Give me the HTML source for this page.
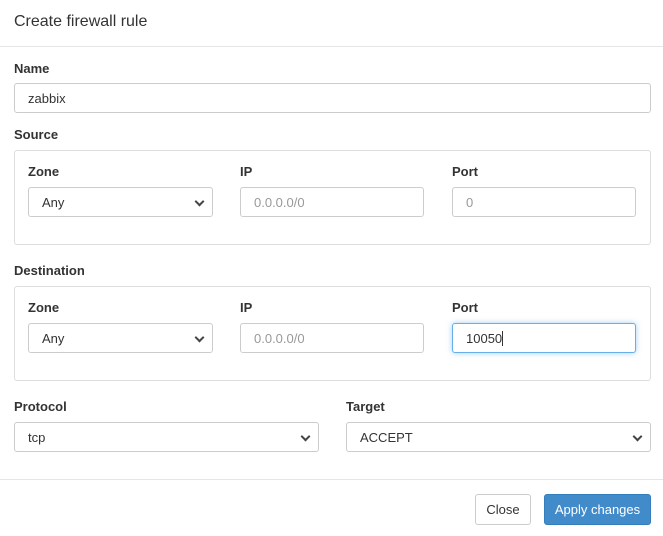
<!DOCTYPE html><html><head><style>
body{margin:0;width:663px;height:536px;background:#fff;font-family:"Liberation Sans",sans-serif;color:#333;position:relative;overflow:hidden}
.a{position:absolute;box-sizing:border-box}
.lbl{font-weight:bold;font-size:13px;line-height:16px}
.in{border:1px solid #ccc;border-radius:3px;font-size:13px;padding-left:13px;display:flex;align-items:center;background:#fff;height:30px}
.ph{color:#999}
.box{border:1px solid #ddd;border-radius:3px}
.sel::after{content:"";position:absolute;right:9px;top:10px;width:5px;height:5px;border-right:2px solid #444;border-bottom:2px solid #444;transform:rotate(45deg)}
.btn{border-radius:3px;font-size:13px;display:flex;align-items:center;justify-content:center;height:31px}
</style></head><body>
<div class="a" style="left:14px;top:13px;font-size:16px">Create firewall rule</div>
<div class="a" style="left:0;top:46px;width:663px;border-top:1px solid #e5e5e5"></div>
<div class="a lbl" style="left:14px;top:61px">Name</div>
<div class="a in" style="left:14px;top:83px;width:637px">zabbix</div>
<div class="a lbl" style="left:14px;top:127px">Source</div>
<div class="a box" style="left:14px;top:150px;width:637px;height:95px"></div>
<div class="a lbl" style="left:28px;top:164px">Zone</div>
<div class="a lbl" style="left:240px;top:164px">IP</div>
<div class="a lbl" style="left:452px;top:164px">Port</div>
<div class="a in sel" style="left:28px;top:187px;width:185px">Any</div>
<div class="a in ph" style="left:240px;top:187px;width:184px">0.0.0.0/0</div>
<div class="a in ph" style="left:452px;top:187px;width:184px">0</div>
<div class="a lbl" style="left:14px;top:263px">Destination</div>
<div class="a box" style="left:14px;top:286px;width:637px;height:95px"></div>
<div class="a lbl" style="left:28px;top:300px">Zone</div>
<div class="a lbl" style="left:240px;top:300px">IP</div>
<div class="a lbl" style="left:452px;top:300px">Port</div>
<div class="a in sel" style="left:28px;top:323px;width:185px">Any</div>
<div class="a in ph" style="left:240px;top:323px;width:184px">0.0.0.0/0</div>
<div class="a in" style="left:452px;top:323px;width:184px;border-color:#66afe9;box-shadow:0 0 6px rgba(102,175,233,.6)">10050<span style="border-left:1px solid #333;height:15px"></span></div>
<div class="a lbl" style="left:14px;top:399px">Protocol</div>
<div class="a lbl" style="left:346px;top:399px">Target</div>
<div class="a in sel" style="left:14px;top:422px;width:305px">tcp</div>
<div class="a in sel" style="left:346px;top:422px;width:305px">ACCEPT</div>
<div class="a" style="left:0;top:479px;width:663px;border-top:1px solid #e5e5e5"></div>
<div class="a btn" style="left:475px;top:494px;width:56px;border:1px solid #ccc">Close</div>
<div class="a btn" style="left:544px;top:494px;width:107px;background:#428bca;border:1px solid #357ebd;color:#fff">Apply changes</div>
</body></html>
